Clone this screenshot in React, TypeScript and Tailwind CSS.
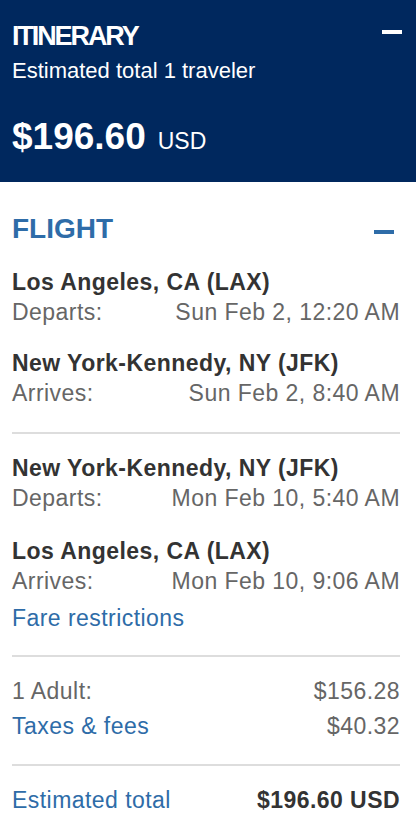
import React from 'react';

interface Leg {
  city: string;
  label: string;
  time: string;
}

const outbound: Leg[] = [
  { city: 'Los Angeles, CA (LAX)', label: 'Departs:', time: 'Sun Feb 2, 12:20 AM' },
  { city: 'New York-Kennedy, NY (JFK)', label: 'Arrives:', time: 'Sun Feb 2, 8:40 AM' },
];

const inbound: Leg[] = [
  { city: 'New York-Kennedy, NY (JFK)', label: 'Departs:', time: 'Mon Feb 10, 5:40 AM' },
  { city: 'Los Angeles, CA (LAX)', label: 'Arrives:', time: 'Mon Feb 10, 9:06 AM' },
];

function LegRow({ leg }: { leg: Leg }) {
  return (
    <div>
      <div className="font-bold text-[#333333] leading-[30px]">{leg.city}</div>
      <div className="flex justify-between text-[#666666] leading-[30px]">
        <span>{leg.label}</span>
        <span>{leg.time}</span>
      </div>
    </div>
  );
}

export default function App() {
  return (
    <div
      className="w-[416px] min-h-[834px] bg-white text-[23px] tracking-[0.45px]"
      style={{ fontFamily: '"Liberation Sans", Arial, sans-serif' }}
    >
      {/* Itinerary header */}
      <div className="bg-[#00285e] text-white pl-3 pr-[14px] pt-5 pb-5">
        <div className="flex justify-between items-start">
          <div className="text-[27px] font-bold leading-[32px] tracking-[-2.1px]">ITINERARY</div>
          <div className="w-5 h-1 bg-white mt-[10px]" />
        </div>
        <div className="text-[22px] leading-[26px] mt-[6px] tracking-normal">Estimated total 1 traveler</div>
        <div className="mt-8 leading-[42px] tracking-normal">
          <span className="text-[37px] font-bold">$196.60</span>
          <span className="text-[23px] ml-3">USD</span>
        </div>
      </div>

      {/* Flight details */}
      <div className="pl-3 pr-4 pt-[30px]">
        <div className="flex justify-between items-start">
          <div className="text-[28px] font-bold leading-[34px] text-[#2e6ca8] tracking-normal">FLIGHT</div>
          <div className="w-5 h-1 bg-[#2e6ca8] mt-[18px] mr-[6px]" />
        </div>

        <div className="mt-[21px] flex flex-col gap-[21px]">
          {outbound.map((leg, i) => (
            <LegRow key={i} leg={leg} />
          ))}
        </div>

        <div className="h-[2px] bg-[#dddddd] mt-6 mb-[19px]" />

        <div className="flex flex-col gap-[23px]">
          {inbound.map((leg, i) => (
            <LegRow key={i} leg={leg} />
          ))}
        </div>
        <div className="text-[#2e6ca8] leading-[30px] mt-[7px]">Fare restrictions</div>

        <div className="h-[2px] bg-[#dddddd] mt-[22px] mb-[19px]" />

        {/* Price breakdown */}
        <div className="flex justify-between leading-[30px] text-[#666666]">
          <span>1 Adult:</span>
          <span>$156.28</span>
        </div>
        <div className="flex justify-between leading-[30px] mt-[5px]">
          <span className="text-[#2e6ca8]">Taxes &amp; fees</span>
          <span className="text-[#666666]">$40.32</span>
        </div>

        <div className="h-[2px] bg-[#dddddd] mt-[23px] mb-[19px]" />

        <div className="flex justify-between leading-[30px]">
          <span className="text-[#2e6ca8]">Estimated total</span>
          <span className="font-bold text-[#333333]">$196.60 USD</span>
        </div>
      </div>
    </div>
  );
}
